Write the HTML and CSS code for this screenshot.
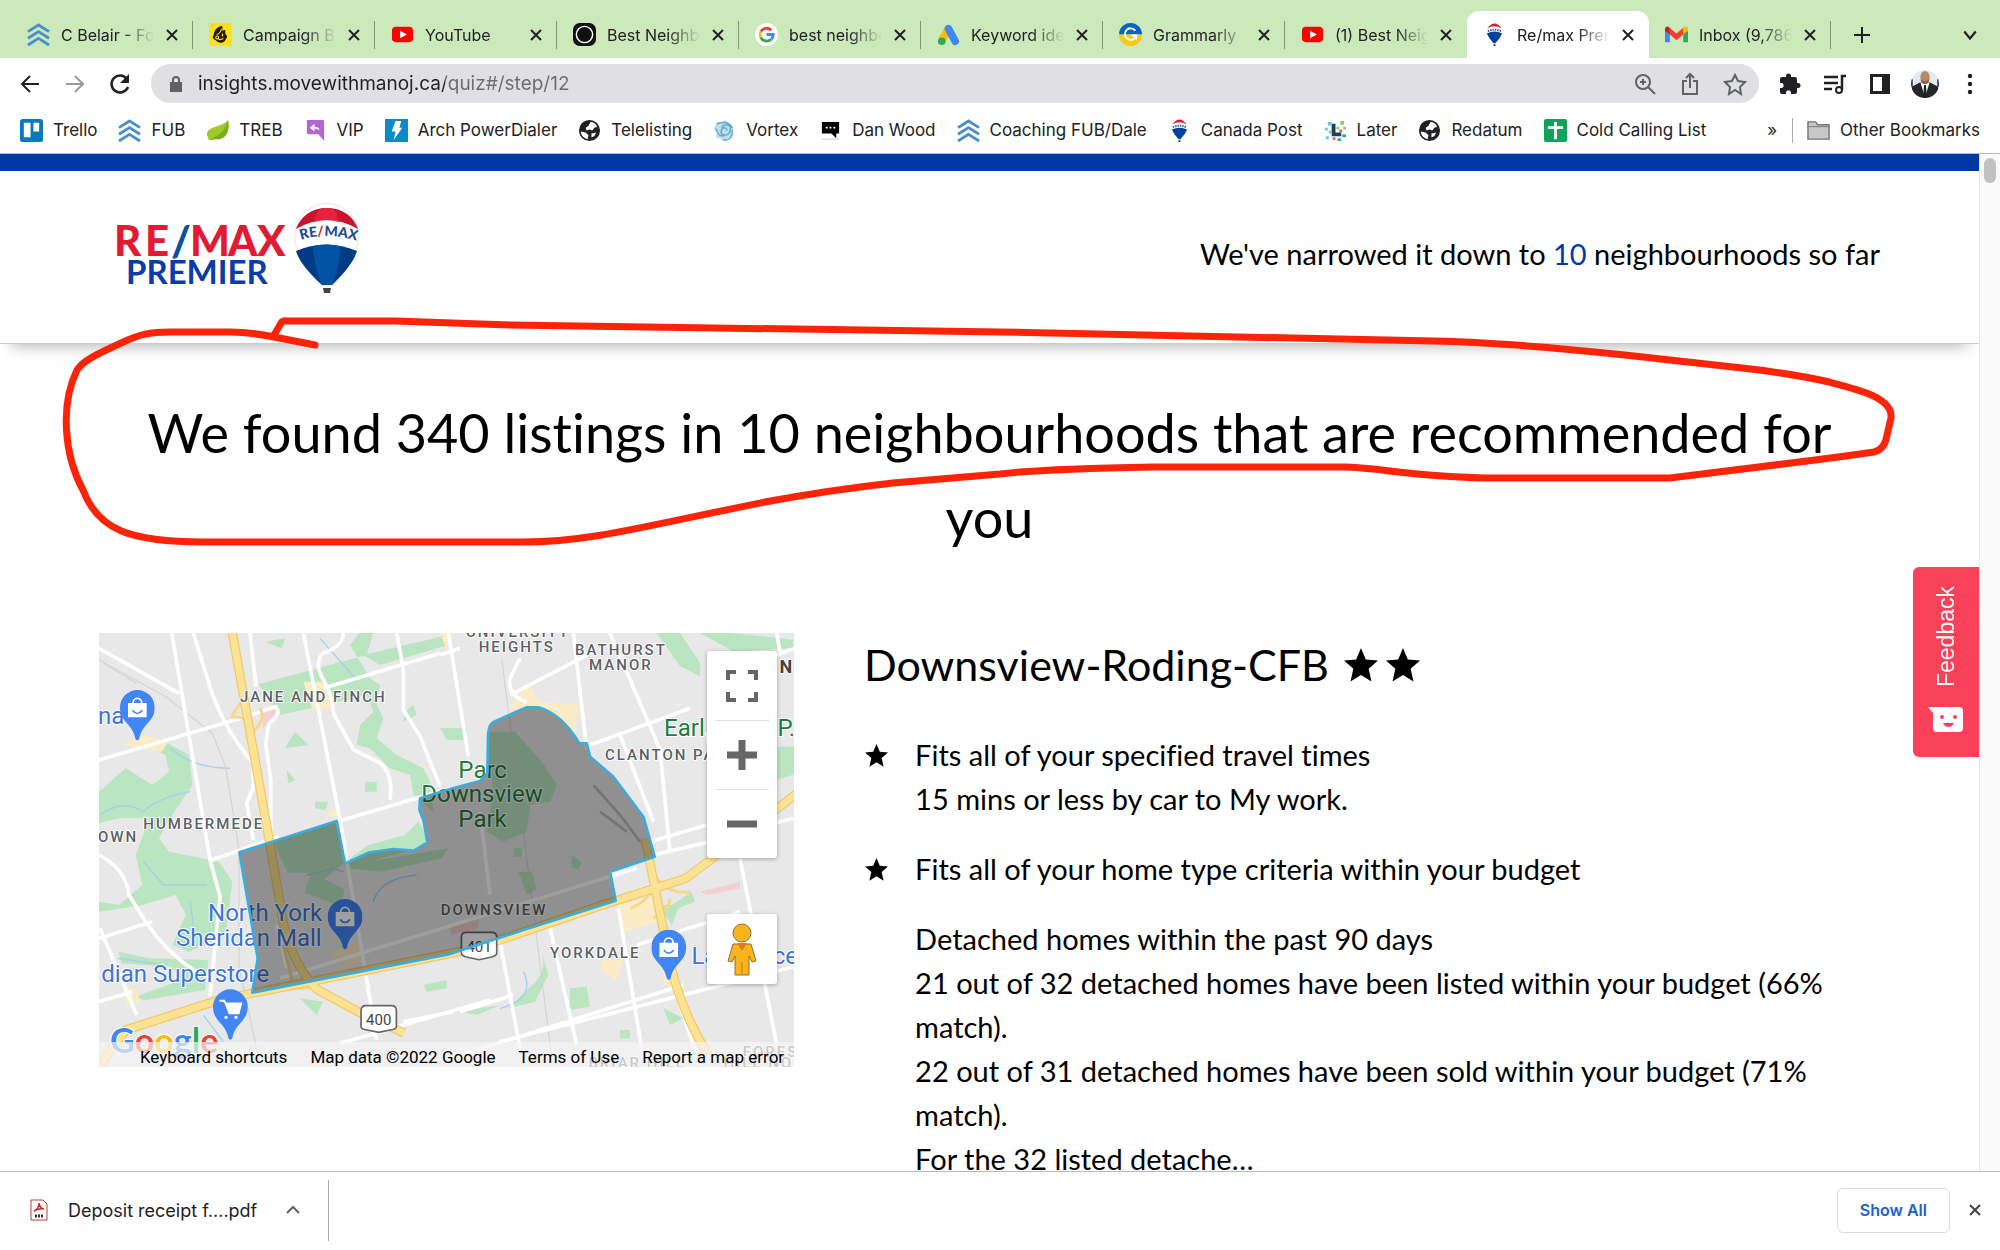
FILE: index.html
```html
<!DOCTYPE html>
<html lang="en">

<head>
    <meta charset="UTF-8">
    <meta name="viewport" content="width=device-width, initial-scale=1.0">
    <title>Re/max Premier</title>
    <link rel="stylesheet" href="styles.css">
</head>

<body>
    <!-- Shared icons -->
    <svg class="sprite" aria-hidden="true">
        <symbol id="fub" viewBox="0 0 24 24">
            <path d="M1 9l11-7 11 7M1 16l11-7 11 7M1 23l11-7 11 7" fill="none" stroke="#4a8fcb" stroke-width="3"/>
        </symbol>
        <symbol id="youtube" viewBox="0 0 24 24">
            <rect x="1" y="4" width="22" height="16" rx="4" fill="#f00"/>
            <path d="M9.500 8v8l7-4z" fill="#fff"/>
        </symbol>
        <symbol id="balloon" viewBox="0 0 24 24">
            <path d="M4 8a8 8 0 0 1 16 0q0 5-7 13h-2Q4 13 4 8z" fill="#fff"/>
            <path d="M4.500 5.500Q12-4.500 19.500 5.500 12 1.500 4.500 5.500z" fill="#dc1c2e"/>
            <path d="M4 11q8-4 16 0-2 5-7 10h-2Q6 16 4 11z" fill="#00439c"/>
            <path d="M5 8.500q7-3 14 0" fill="none" stroke="#33549c" stroke-width="2" stroke-dasharray="1.500 1"/>
            <path d="M11 22h2v2h-2z" fill="#444"/>
        </symbol>
        <symbol id="globe" viewBox="0 0 24 24">
            <circle cx="12" cy="12" r="11" fill="#202124"/>
            <path d="M13 3c3 0 6 2 7 5l-3 1-2 3-3-1-3 1-1-3 3-2zM3 13l5 1 3 3-1 4c-4-1-7-4-7-8zM14 15l5-1-2 4-3 1z" fill="#fff"/>
        </symbol>
        <symbol id="close" viewBox="0 0 14 14">
            <path d="M2 2l10 10M12 2L2 12" fill="none" stroke="currentColor" stroke-width="2"/>
        </symbol>
        <symbol id="star" viewBox="0 0 24 24">
            <path d="M12 0l3.400 8.200 8.600.700-6.600 5.800 2 9L12 19l-7.400 4.700 2-9L0 8.900l8.600-.700z"/>
        </symbol>
        <symbol id="bag-pin" viewBox="0 0 104 152">
            <path d="M52 0a52 52 0 0 1 52 54c0 42-39 48-46 92q-6 10-12 0C39 102 0 96 0 54A52 52 0 0 1 52 0z" fill="#4285f4"/>
            <path d="M24 39h56v43H24z" fill="#fff"/>
            <path d="M39 42v-4a13 13 0 0 1 26 0v4" fill="none" stroke="#fff" stroke-width="5"/>
            <path d="M37 61q15 19 30 0" fill="none" stroke="#4285f4" stroke-width="5"/>
        </symbol>
    </svg>

    <!-- Tabs -->
    <nav class="tabs">
        <div class="tab"><svg class="icon"><use href="#fub"/></svg><a href="#">C Belair - Follow Up</a><button aria-label="Close tab"><svg><use href="#close"/></svg></button></div>
        <div class="tab">
            <svg class="icon" viewBox="0 0 24 24"><path fill="#ffe01b" d="M0 0h24v24H0z"/><path d="M14 3c-5 0-9 5-9 9l-1 2c0 3 2 3 3 4 2 3 7 4 10 0l2-4-2-3V7l-3 1z" fill="#241c15"/><path d="M8 12q4-1 5-6M14 11v3m-4 3q3 1 5-1M7 15a1.500 1.500 0 1 1 0 .1" stroke="#ffe01b" stroke-width="1.200" fill="none"/></svg>
            <a href="#">Campaign Builder</a><button aria-label="Close tab"><svg><use href="#close"/></svg></button>
        </div>
        <div class="tab"><svg class="icon"><use href="#youtube"/></svg><a href="#">YouTube</a><button aria-label="Close tab"><svg><use href="#close"/></svg></button></div>
        <div class="tab">
            <svg class="icon" viewBox="0 0 24 24"><rect width="24" height="24" rx="7" fill="#111"/><circle cx="12" cy="12" r="8.500" fill="none" stroke="#fff" stroke-width="1.500"/></svg>
            <a href="#">Best Neighbourhoods</a><button aria-label="Close tab"><svg><use href="#close"/></svg></button>
        </div>
        <div class="tab">
            <svg class="icon" viewBox="0 0 24 24"><circle cx="12" cy="12" r="12" fill="#fff"/><g fill="none" stroke-width="3"><path d="M17 7.500A7 7 0 0 0 6 9" stroke="#ea4335"/><path d="M6 9a7 7 0 0 0 0 6" stroke="#fbbc05"/><path d="M6 15a7 7 0 0 0 11 2" stroke="#34a853"/><path d="M17 17q2-2 2-5h-7" stroke="#4285f4"/></g></svg>
            <a href="#">best neighbourhood</a><button aria-label="Close tab"><svg><use href="#close"/></svg></button>
        </div>
        <div class="tab">
            <svg class="icon" viewBox="0 0 24 24"><path d="M12 6L5 18" stroke="#fbbc04" stroke-width="8"/><path d="M12 6l7 13" stroke="#4285f4" stroke-width="8" stroke-linecap="round"/><circle cx="5" cy="19" r="4" fill="#34a853"/></svg>
            <a href="#">Keyword ideas</a><button aria-label="Close tab"><svg><use href="#close"/></svg></button>
        </div>
        <div class="tab">
            <svg class="icon" viewBox="0 0 24 24"><path d="M0 12a12 12 0 0 1 24 0z" fill="#0b62c4"/><path d="M0 12a12 12 0 0 0 24 0z" fill="#f5cb12"/><path d="M17 8a6 6 0 1 0 1 5h-5m5 0v4" fill="none" stroke="#fff" stroke-width="2"/></svg>
            <a href="#">Grammarly</a><button aria-label="Close tab"><svg><use href="#close"/></svg></button>
        </div>
        <div class="tab"><svg class="icon"><use href="#youtube"/></svg><a href="#">(1) Best Neighbourhood</a><button aria-label="Close tab"><svg><use href="#close"/></svg></button></div>
        <div class="tab active"><svg class="icon"><use href="#balloon"/></svg><a href="#">Re/max Premier</a><button aria-label="Close tab"><svg><use href="#close"/></svg></button></div>
        <div class="tab">
            <svg class="icon" viewBox="0 0 24 24"><path d="M0 6v14h5V9z" fill="#4285f4"/><path d="M24 6v14h-5V9z" fill="#34a853"/><path d="M5 5l7 6 7-6v7l-7 6-7-6z" fill="#ea4335"/><path d="M0 6q1-4 5-1v7l-5-4z" fill="#c5221f"/><path d="M24 6q-1-4-5-1v7l5-4z" fill="#fbbc04"/></svg>
            <a href="#">Inbox (9,786)</a><button aria-label="Close tab"><svg><use href="#close"/></svg></button>
        </div>
        <button class="new-tab" aria-label="New tab"><svg viewBox="0 0 18 18"><path d="M9 1v16M1 9h16" stroke="currentColor" stroke-width="2"/></svg></button>
        <button class="tab-search" aria-label="Search tabs"><svg viewBox="0 0 14 14"><path d="M2 4l5 6 5-6" fill="none" stroke="currentColor" stroke-width="2"/></svg></button>
    </nav>

    <!-- Toolbar -->
    <div class="toolbar">
        <button aria-label="Back"><svg viewBox="0 0 24 24"><path d="M21 12H4m8-8l-8 8 8 8" fill="none" stroke="#202124" stroke-width="2"/></svg></button>
        <button aria-label="Forward"><svg viewBox="0 0 24 24"><path d="M3 12h17m-8-8l8 8-8 8" fill="none" stroke="#96989b" stroke-width="2"/></svg></button>
        <button aria-label="Reload"><svg viewBox="0 0 24 24"><path d="M19 7a8.500 8.500 0 1 0 1 8" fill="none" stroke="#202124" stroke-width="2.500"/><path d="M21 2v9h-9z" fill="#202124"/></svg></button>
        <div class="address">
            <svg class="lock" viewBox="0 0 14 18"><path d="M1 7h12v10H1z" fill="#5f6368"/><path d="M4 8V5a3 3 0 0 1 6 0v3" fill="none" stroke="#5f6368" stroke-width="2"/></svg>
            <input type="text" aria-label="Address" value="insights.movewithmanoj.ca/quiz#/step/12">
            <button aria-label="Zoom"><svg viewBox="0 0 24 24"><g fill="none" stroke="#5f6368" stroke-width="2"><circle cx="10" cy="10" r="7"/><path d="M15 15l7 7M10 7v6M7 10h6"/></g></svg></button>
            <button aria-label="Share"><svg viewBox="0 0 24 24"><path d="M9 9H5v13h14V9h-4M12 16V3M8 6l4-4 4 4" fill="none" stroke="#5f6368" stroke-width="2"/></svg></button>
            <button aria-label="Bookmark"><svg viewBox="0 0 24 24"><path d="M12 3l3 6 7 1-5 5 1 7-6-4-6 4 1-7-5-5 7-1z" fill="none" stroke="#5f6368" stroke-width="2"/></svg></button>
        </div>
        <button aria-label="Extensions"><svg viewBox="0 0 24 24"><path d="M20 11h-1V7a2 2 0 0 0-2-2h-4V4a2.500 2.500 0 0 0-5 0v1H4a2 2 0 0 0-2 2v4h2a2.700 2.700 0 0 1 0 5H2v4a2 2 0 0 0 2 2h4v-2a2.700 2.700 0 0 1 5 0v2h4a2 2 0 0 0 2-2v-4h1a2.500 2.500 0 0 0 0-5z" fill="#202124"/></svg></button>
        <button aria-label="Media"><svg viewBox="0 0 24 24"><path d="M1 5h14M1 11h14M1 17h8M23 4h-4v14" fill="none" stroke="#202124" stroke-width="2.500"/><circle cx="16" cy="18" r="3" fill="none" stroke="#202124" stroke-width="2"/></svg></button>
        <button aria-label="Side panel"><svg viewBox="0 0 24 24"><path d="M2 2h20v20H2zM5 5v14h9V5z" fill="#202124" fill-rule="evenodd"/></svg></button>
        <button class="profile" aria-label="Profile"><svg viewBox="0 0 32 32"><clipPath id="round"><circle cx="16" cy="16" r="15"/></clipPath><g clip-path="url(#round)"><path d="M0 0h32v32H0z" fill="#e6eaf0"/><path d="M0 11h3v8H0zM29 11h3v8h-3zM10 0h12v1H10z" fill="#2e3f7d"/><path d="M2 32V19l9-5h10l9 5v13z" fill="#25262a"/><path d="M11 14l5 16 5-16z" fill="#fff"/><path d="M15 17h2l1 13h-4z" fill="#202124"/><ellipse cx="16" cy="9" rx="5" ry="7" fill="#ba8868"/><path d="M12 11q4 5 8 0v3q-4 4-8 0z" fill="#8a5f48"/></g></svg></button>
        <button aria-label="Menu"><svg viewBox="0 0 24 24"><g fill="#202124"><circle cx="12" cy="4" r="2.200"/><circle cx="12" cy="12" r="2.200"/><circle cx="12" cy="20" r="2.200"/></g></svg></button>
    </div>

    <!-- Bookmarks -->
    <nav class="bookmarks">
        <a href="#"><svg class="icon" viewBox="0 0 24 24"><rect width="24" height="24" rx="3" fill="#0a78bf"/><path d="M4 4h7v15H4zM14 4h6v9h-6z" fill="#fff"/></svg>Trello</a>
        <a href="#"><svg class="icon"><use href="#fub"/></svg>FUB</a>
        <a href="#"><svg class="icon" viewBox="0 0 24 24"><path d="M1 17C0 7 17 9 23 1c2 10-1 22-14 20l-6 1z" fill="#9fc92a"/><path d="M3 22C9 19 19 16 23 1c2 10-1 22-14 20z" fill="#78ad22"/></svg>TREB</a>
        <a href="#"><svg class="icon" viewBox="0 0 24 24"><path d="M3 1h17q1 0 1 2v20l-6-7H5q-2 0-2-2z" fill="#b465d4"/><path d="M16 12c0-3-2-4-5-4V5L6 9l5 4v-3q3 0 5 2z" fill="#fff"/></svg>VIP</a>
        <a href="#"><svg class="icon" viewBox="0 0 24 24"><path d="M0 0h24v24H0z" fill="#0b8bc9"/><path d="M11 2h6l-2 7h3L9 22l2-9H7z" fill="#fff"/></svg>Arch PowerDialer</a>
        <a href="#"><svg class="icon"><use href="#globe"/></svg>Telelisting</a>
        <a href="#"><svg class="icon" viewBox="0 0 24 24"><path d="M4 4l5-1 4-2 3 4 5 3-1 5 2 4-6 2-3 4-4-2-6-2 1-5-3-4z" fill="#b9dfec"/><path d="M4 5q12-4 16 4-7-6-11 0M3 10q3 10 9 7M10 22q11 1 10-11M18 8q1 9-6 9-5-1-3-6 4-4 6 1" fill="none" stroke="#63a9c6" stroke-width="1.500"/></svg>Vortex</a>
        <a href="#"><svg class="icon" viewBox="0 0 24 24"><path d="M3 3h18v12h-3v5l-5-5H3z"/><path d="M7 8h2v2H7zM11 8h2v2h-2zM15 8h2v2h-2z" fill="#fff"/><path d="M3 21h18" stroke="#ccc"/></svg>Dan Wood</a>
        <a href="#"><svg class="icon"><use href="#fub"/></svg>Coaching FUB/Dale</a>
        <a href="#"><svg class="icon"><use href="#balloon"/></svg>Canada Post</a>
        <a href="#"><svg class="icon" viewBox="0 0 24 24"><path d="M8 5h4v9h6v4H8z" fill="#1d4154"/><path d="M4 3h4v4H4zM1 9h3v3H1zM5 12h3v3H5zM2 18h3v3H2z" fill="#6fc7e8"/><path d="M17 2h4v4h-4zM13 8h3v3h-3zM20 8h3v3h-3z" fill="#8dd35f"/><path d="M16 11h3v3h-3zM9 19h3v3H9z" fill="#e56a50"/><path d="M19 16h4v3h-4zM14 20h4v3h-4z" fill="#3fa8a0"/></svg>Later</a>
        <a href="#"><svg class="icon"><use href="#globe"/></svg>Redatum</a>
        <a href="#"><svg class="icon" viewBox="0 0 24 24"><rect width="24" height="24" rx="2" fill="#12a05c"/><path d="M12 3v18M4 9h16" stroke="#fff" stroke-width="3"/></svg>Cold Calling List</a>
        <button class="more" aria-label="More bookmarks">»</button>
        <a class="other" href="#"><svg class="icon" viewBox="0 0 24 24"><path d="M1 3h8l2 3h12v15H1z" fill="#c8c8c8" stroke="#747474" stroke-width="1.500"/><path d="M1 8h22" stroke="#747474"/></svg>Other Bookmarks</a>
    </nav>

    <div class="viewport">
        <main class="page">
            <header class="site-header">
                <svg class="logo" viewBox="0 0 260 100" role="img" aria-label="RE/MAX Premier">
                    <g class="logo-remax"><text x="3" y="58">R</text><text x="34" y="58">E</text><text class="logo-blue" x="60" y="58">/</text><text x="79" y="58">M</text><text x="117" y="58">A</text><text x="146" y="58">X</text></g>
                    <text class="logo-premier" x="15" y="86">PREMIER</text>
                    <path d="M184 37a31 31 0 0 1 63 0q2 18-24 50h-14Q182 55 184 37z" fill="#fff" stroke="#e4e4e4"/>
                    <path d="M185 31C190 18 200 10 216 10s27 9 31 21q-31-18-62 0z" fill="#c9142b"/>
                    <path d="M203 24q2-11 8-14h9q6 3 8 14-12-4-25 0z" fill="#e5233d"/>
                    <path d="M185 53q30-13 61 0-4 14-25 34h-10Q189 67 185 53z" fill="#003c86"/>
                    <path d="M202 48q13-3 27 0 0 20-8 39h-10q-8-18-9-39z" fill="#0353a4"/>
                    <path id="band" d="M190 42q26-9 60 2" fill="none"/>
                    <text class="logo-band"><textPath href="#band">RE<tspan fill="#dc1c2e">/</tspan>MAX</textPath></text>
                    <path d="M212 90h8l-1 5h-6z" fill="#444"/>
                </svg>
                <p>We've narrowed it down to <span class="count">10</span> neighbourhoods so far</p>
            </header>

            <h1>We found 340 listings in 10 neighbourhoods that are recommended for you</h1>

            <section class="result">
                <div class="map">
                    <svg class="map-canvas" viewBox="27 24 2085 1302" role="img" aria-label="Map of Downsview-Roding-CFB">
                        <path d="M0 0h2200v1400H0z" fill="#e8e8e8"/>
                        <!-- Parks -->
                        <g fill="#b9e5c0">
                            <path d="M505 178L830 90l20-70h-40l-30 40 60 100 30 20-10 60 20 40-20 60 60 50 80 40 20 40 10 90-60-50-10-60-60-20-60-60-40-10 10-60 40-40-20-50-260 60z"/>
                            <path d="M820 90L1075 30v30L870 120zM525 50l60-10-10 30zM585 370l30-50 40 40zM590 435l25 30-20 10zM825 470l35 0 0 30-35 0zM675 530l40 0-10 25-30-5zM945 260l25-20 10 30-40 20zM1050 310h80v35h-60z"/>
                            <path d="M27 500l80-70 80 50 50-40-10-50-40-20 20-30 90 50 10 90-60 90-40 70 30 40 150 30 40 60-20 160-110 50-50-20 40-90-30-60-100 30-130 20 0-30 60 10 70-60-20-90 40-110-90 0-80 20z"/>
                            <path d="M85 980l90 20 180 5-10 90-180 30-30-10 140-50-30-40-150-10z"/>
                            <path d="M550 650l185-62 28 125-60 50 60 30-10 50-110-40 20-60-70 0z"/>
                            <path d="M765 710l70-50 110-30 40-40 30 50-30 30-150 40 120-20 120-20-20 30-180 40-100-10z"/>
                            <path d="M1200 320h75l80 90 45 70-20 50-60 10-10 80-70 30-50-30 20-120-20-120z"/>
                            <path d="M1285 740h40l15 50-30 20zM1445 690l30 20-10 25-20-10zM1270 670h25v25h-25zM1050 310h35l5 30zM1440 1090l50-5 10 60-60 10zM1590 1215h30v25h-30zM1720 1150l60 30-40 20zM1000 1080l70-15v25l-60 10zM630 1120l70 10-20 40z"/>
                            <path d="M1355 980q20 70-50 120l-50 50 80-20 40-80zM1110 1160l120-20-70 30z"/>
                            <path d="M1700 24l70 100 60 30 0-40-60-90zM1830 24h90l190 20v25l-180 10zM1745 840l60-40 10 30-50 20-20 50-40-60zM2060 365h60v80l-60 20z"/>
                        </g>
                        <!-- Commercial blocks -->
                        <g fill="#fcecc5">
                            <path d="M640 170h60l30 80-60 10zM95 360l70-30 70 20-20 30zM1255 250l60-80 30 60 120 10-10 90-90-70zM1575 840l110-20 20 70-100 30zM1530 1005h70l-20 60-40-20zM100 1090h40l10 40-40 10zM720 980l90-30 10 60-60 20zM1720 980h40v100h-40zM1050 24h40l-20 50zM710 570l30-25 20 35z"/>
                        </g>
                        <path d="M515 260l55-10-50 60zM1830 800l120-30v20l-100 20zM1075 900l90-20v30l-80 20z" fill="#f4cfcf"/>
                        <!-- Water and rail -->
                        <g fill="none">
                            <path d="M690 40l110 125M240 370q70 60 180 60M30 570q70-50 130-10 40-40 140-60M160 710l60 70 130 0M300 830l10 70M850 830q20-70 130-80M1300 1040q40 80-70 110M85 1000l140 20M650 750l80-20 30 10M340 1170l60 80" stroke="#a5cfea" stroke-width="4"/>
                            <path d="M27 105l200 110 140 110 40 100 40 250 0 350 60 280M1235 100l150 1200M40 115l100 60" stroke="#d0d0d0" stroke-width="3"/>
                            <path d="M1510 480l80 90 60 80M1530 560l80 60" stroke="#bcbcbc" stroke-width="8"/>
                        </g>
                        <!-- Streets -->
                        <g fill="none" stroke="#fff" stroke-width="11" stroke-linejoin="round">
                            <path d="M245 24l115 680 30 110-30 300M310 24l40 130Q390 300 490 415l0 70-20 50 20 110M480 24l18 160M27 70l240 135M27 405l440-130 90-30q20 20-20 50l-10 60 15 110 0 180 10 50M640 24l110 560 110 660M760 24q0 40-60 60-30 30 0 80 30 50 30 100l60 110 80 40q40 30 30 110M700 190L1050 85M920 24l20 110 0 120 50 80 60 150M365 705l200-70M740 590l340-100M27 690q80 40 90 120l50 80q60 90 150 150M30 910l110 260M27 940l160-50M570 1060L1640 730M27 1130l100-30M560 900l30 130M750 1255l450-130M940 1190l150-30"/>
                            <path d="M1050 90l60-20M1075 24l60 370M1450 24l40 350M1260 210l230-120M1290 100l-30 60q-10 50 50 70M1500 360l300-110M1560 24l150 350 30 310M1680 650l170-50M1590 330l100 260M2110 580l-200 50M1170 560l30 250M1230 950l60 320M1380 910l80 350M1585 850l70 420M1110 1160l160-50M1230 1250l900-230M1080 1300l700-220M1640 960l310-100M1690 690L1860 650M1950 700l110 560M1750 1080l80 240M2060 24l10 60M1850 320l30 200M1920 150L2112 70"/>
                        </g>
                        <!-- Highways -->
                        <path d="M455 230q-30 40-30 45 60 0 65 45 40-40 20-70M1620 850q60-20 80-90 40 50 100 40M1690 880q50-30 50-60M580 960q20 80 30 120M590 1090l80 0" fill="none" stroke="#f6d88a" stroke-width="9"/>
                        <g fill="none" stroke="#edc967" stroke-width="28" stroke-linejoin="round">
                            <path d="M427 24l100 560 55 320q30 120 100 190l130 70 130 60M27 1325l80-110 280-90 770-155 380-130 250-80 120-90 220-170M1665 640l60 300q30 190 130 350"/>
                        </g>
                        <g fill="none" stroke="#fde293" stroke-width="21" stroke-linejoin="round">
                            <path d="M427 24l100 560 55 320q30 120 100 190l130 70 130 60M27 1325l80-110 280-90 770-155 380-130 250-80 120-90 220-170M1665 640l60 300q30 190 130 350"/>
                        </g>

                        <!-- Labels -->
                        <g class="area">
                            <text x="450" y="230">JANE AND FINCH</text>
                            <text x="160" y="612">HUMBERMEDE</text>
                            <text x="24" y="651">OWN</text>
                            <text x="1052" y="870">DOWNSVIEW</text>
                            <text x="1380" y="998">YORKDALE</text>
                            <text x="1128" y="35">UNIVERSITY</text>
                            <text x="1166" y="82">HEIGHTS</text>
                            <text x="1455" y="89">BATHURST</text>
                            <text x="1497" y="136">MANOR</text>
                            <text x="1545" y="406">CLANTON PARK</text>
                            <text x="1495" y="1328">BRIAR HILL</text>
                            <text x="1958" y="1296">FOREST</text>
                            <text x="1900" y="1330">HILL NO</text>
                        </g>
                        <g class="park">
                            <text x="1105" y="459">Parc</text>
                            <text x="994" y="532">Downsview</text>
                            <text x="1105" y="605">Park</text>
                            <text x="1722" y="332">Earl</text>
                            <text x="2062" y="332">P.</text>
                        </g>
                        <text class="district" x="2068" y="144">N</text>
                        <g class="shop">
                            <text x="24" y="296">na</text>
                            <text x="354" y="888">North York</text>
                            <text x="258" y="962">Sheridan Mall</text>
                            <text x="34" y="1072">dian Superstore</text>
                            <text x="1804" y="1016">La<tspan x="2048">ce</tspan></text>
                        </g>
                        <use href="#bag-pin" x="90" y="195" width="104" height="152"/>
                        <use href="#bag-pin" x="713" y="822" width="104" height="152"/>
                        <use href="#bag-pin" x="1684" y="914" width="104" height="152"/>
                        <path d="M421 1093a52 52 0 0 1 52 54c0 42-39 48-46 92q-6 10-12 0c-7-44-46-50-46-92a52 52 0 0 1 52-54z" fill="#4285f4"/>
                        <path d="M388 1127h15l15 38h28l8-30h-44" fill="#fff" stroke="#fff" stroke-width="5"/>
                        <circle cx="408" cy="1177" r="5" fill="#fff"/><circle cx="438" cy="1177" r="5" fill="#fff"/>
                        <g fill="#fff" stroke="#666" stroke-width="5">
                            <path d="M828 1142h76q15 0 15 15v47q0 8-15 10l-38 8-38-8q-15-2-15-10v-47q0-15 15-15z"/>
                            <path d="M1129 922h76q15 0 15 15v47q0 8-15 12l-38 8-38-8q-15-4-15-12v-47q0-15 15-15z"/>
                        </g>
                        <g class="shield"><text x="866" y="1199">400</text><text x="1167" y="980">401</text></g>
                        <path d="M448 682l292-94 25 127 70-32 75-11 62 5 40-25-12-67-12-30 2-35 90-28 90-24 22-23 2-115q2-35 18-40l98-43h35q70 20 123 108h22l10 40 70 60 90 120 34 120-134 45 17 87-277 88-225 73-588 115 16-103z" fill="#000" fill-opacity=".38" stroke="#3dabdb" stroke-width="8" stroke-linejoin="round"/>
                        <text class="google" x="60" y="1283"><tspan fill="#4285f4">G</tspan><tspan fill="#ea4335">o</tspan><tspan fill="#fbbc05">o</tspan><tspan fill="#4285f4">g</tspan><tspan fill="#34a853">l</tspan><tspan fill="#ea4335">e</tspan></text>
                    </svg>
                    <div class="map-zoom">
                        <button aria-label="Fullscreen"><svg viewBox="0 0 32 32"><path d="M2 10V2h8M22 2h8v8M30 22v8h-8M10 30H2v-8" fill="none" stroke="#666" stroke-width="4"/></svg></button>
                        <button aria-label="Zoom in"><svg viewBox="0 0 32 32"><path d="M16 1v30M1 16h30" stroke="#666" stroke-width="7"/></svg></button>
                        <button aria-label="Zoom out"><svg viewBox="0 0 32 32"><path d="M1 16h30" stroke="#666" stroke-width="7"/></svg></button>
                    </div>
                    <button class="pegman" aria-label="Street View"><svg viewBox="0 0 32 54"><g fill="#fbb41a" stroke="#8c6d3c"><path d="M7 22h18l5 17-4 1-3-6v19H9V34l-3 6-4-1z"/><circle cx="16" cy="11" r="9"/></g><path d="M11 21h10l-5 8z" fill="#df7b22"/><path d="M16 40v12" stroke="#b77a1b"/></svg></button>
                    <div class="map-terms">
                        <button>Keyboard shortcuts</button>
                        <span>Map data ©2022 Google</span>
                        <a href="#">Terms of Use</a>
                        <a href="#">Report a map error</a>
                    </div>
                </div>

                <div class="details">
                    <h2>Downsview-Roding-CFB <span class="rating"><svg><use href="#star"/></svg><svg><use href="#star"/></svg></span></h2>
                    <ul>
                        <li>
                            <svg class="bullet"><use href="#star"/></svg>
                            <div>
                                <p>Fits all of your specified travel times<br>15 mins or less by car to My work.</p>
                            </div>
                        </li>
                        <li>
                            <svg class="bullet"><use href="#star"/></svg>
                            <div>
                                <p>Fits all of your home type criteria within your budget</p>
                                <p>Detached homes within the past 90 days<br>
                                    21 out of 32 detached homes have been listed within your budget (66% match).<br>
                                    22 out of 31 detached homes have been sold within your budget (71% match).<br>
                                    For the 32 listed detache…</p>
                            </div>
                        </li>
                    </ul>
                </div>
            </section>
        </main>
        <div class="scrollbar"><div class="thumb"></div></div>
        <button class="feedback">
            <span>Feedback</span>
            <svg viewBox="0 0 36 28"><path d="M0 1h31q4 0 4 4v17q0 4-4 4H9q-4 0-4-4V7z" fill="#fff"/><circle cx="14" cy="11" r="2" fill="#f9425a"/><circle cx="27" cy="11" r="2" fill="#f9425a"/><path d="M15 17h11q-2 4-5.500 4T15 17z" fill="#f9425a"/></svg>
        </button>
    </div>

    <!-- Downloads -->
    <footer class="downloads">
        <a class="file" href="#">
            <svg viewBox="0 0 18 22"><path d="M1 1h12l4 4v16H1z" fill="#fff" stroke="#c33b3b"/><path d="M4 12q5-2 5-8 1 6 5 6-5-1-10 2z" fill="none" stroke="#d82020" stroke-width="1.500"/><path d="M5 17h9" stroke="#333" stroke-width="3" stroke-dasharray="2 1"/></svg>
            Deposit receipt f....pdf
        </a>
        <button class="file-menu" aria-label="File options"><svg viewBox="0 0 14 14"><path d="M1 10l6-6 6 6" fill="none" stroke="#5f6368" stroke-width="2"/></svg></button>
        <button class="show-all">Show All</button>
        <button class="dismiss" aria-label="Close downloads"><svg><use href="#close"/></svg></button>
    </footer>

    <!-- Red pen mark around the headline -->
    <svg class="pen" viewBox="0 0 2000 1250" preserveAspectRatio="none" aria-hidden="true">
        <path d="M315 345L274 337Q250 332 230 332H170C150 332 140 334 121 343 95 355 83 361 77 370C60 405 64 455 83 490C98 530 130 542 204 542H523C590 542 640 527 765 502Q830 490 893 483L1000 474Q1040 469 1153 467H1344C1375 467 1420 478 1497 478H1670L1791 463Q1840 457 1874 452 1885 449 1887 435L1891 418C1893 398 1860 390 1829 382 1790 373 1760 370 1733 367L1625 355Q1500 342 1434 341L1000 332 510 325 395 321H287Q282 320 280 325L274 335"/>
    </svg>
</body>

</html>
```
FILE: styles.css
```css
* {
    box-sizing: border-box;
}

body {
    margin: 0;
    height: 100vh;
    display: flex;
    flex-direction: column;
    overflow: hidden;
    background: #fff;
    color: #000;
    font-family: Inter, "Liberation Sans", sans-serif;
    font-size: 16px;
}

button {
    display: flex;
    align-items: center;
    justify-content: center;
    padding: 0;
    border: none;
    background: none;
    color: inherit;
    font: inherit;
    cursor: pointer;
}

a {
    color: inherit;
    text-decoration: none;
}

svg {
    display: block;
    flex: none;
}

.sprite {
    position: absolute;
    width: 0;
    height: 0;
}

.icon {
    width: 23px;
    height: 23px;
}

/* Tabs */
.tabs {
    display: flex;
    height: 58px;
    padding: 11px 22px 0 11px;
    background: #cce9bc;
    color: #202124;
}

.tab {
    display: flex;
    align-items: center;
    flex: 0 1 182px;
    min-width: 0;
    gap: 11px;
    padding: 0 14px 0 16px;
    background: linear-gradient(#7d9a74, #7d9a74) right center / 1px 28px no-repeat;
}

.tab a {
    flex: 1;
    min-width: 0;
    overflow: hidden;
    white-space: nowrap;
    mask-image: linear-gradient(to right, #000 65%, transparent);
}

.tab button {
    width: 14px;
}

.tab svg:not(.icon) {
    width: 14px;
    height: 14px;
}

.tab.active {
    background: #fff;
    border-radius: 12px 12px 0 0;
}

.tab:has(+ .active) {
    background: none;
}

.new-tab {
    width: 62px;
}

.new-tab svg {
    width: 18px;
    height: 18px;
}

.tab-search {
    margin-left: auto;
}

.tab-search svg {
    width: 16px;
    height: 16px;
}

/* Toolbar */
.toolbar {
    display: flex;
    align-items: center;
    gap: 21px;
    padding: 6px 18px;
}

.toolbar button svg {
    width: 24px;
    height: 24px;
}

.toolbar .profile {
    margin: 0 -3px;
}

.toolbar .profile svg {
    width: 30px;
    height: 30px;
}

.address {
    display: flex;
    align-items: center;
    flex: 1;
    height: 39px;
    gap: 21px;
    padding: 0 12px 0 18px;
    margin: 0 -2px;
    border-radius: 20px;
    background: #e0e0e2;
}

.address .lock {
    width: 14px;
    height: 18px;
    margin-right: -6px;
}

.address input {
    flex: 1;
    min-width: 0;
    padding: 0;
    border: none;
    outline: none;
    /* host is dark, path is grey */
    background: linear-gradient(to right, #202124 247px, #6a6c70 247px);
    background-clip: text;
    color: transparent;
    font-family: inherit;
    font-size: 19px;
}

/* Bookmarks */
.bookmarks {
    display: flex;
    align-items: center;
    height: 44px;
    gap: 21px;
    padding: 0 20px 2px;
    color: #202124;
    font-size: 17px;
    white-space: nowrap;
}

.bookmarks a {
    display: flex;
    align-items: center;
    gap: 10px;
}

.bookmarks .more {
    margin-left: auto;
}

.bookmarks .other {
    margin-left: -6px;
    padding-left: 14px;
    border-left: 1px solid #aaa;
    line-height: 25px;
}

/* Page */
.viewport {
    position: relative;
    display: flex;
    flex: 1;
    min-height: 0;
    border-top: 1px solid #bbb;
}

.page {
    flex: 1;
    min-width: 0;
    overflow: hidden;
    border-top: 17px solid #0038a8;
    font-family: Lato, sans-serif;
    font-size: 29px;
    font-variant-ligatures: none;
    line-height: 44px;
}

.page p,
.page h1,
.page h2 {
    margin: 0;
    font-weight: 400;
}

.site-header {
    display: flex;
    align-items: center;
    justify-content: space-between;
    height: 173px;
    padding: 0 99px 6px 111px;
    border-bottom: 1px solid #ccc;
    box-shadow: 0 14px 14px -12px rgba(0, 0, 0, .3);
}

.logo {
    width: 260px;
    height: 100px;
    margin-bottom: 12px;
}

.logo-remax {
    font-size: 42px;
    font-weight: 900;
    fill: #e11b33;
}

.logo-remax .logo-blue {
    fill: #0b50a0;
}

.logo-premier {
    font-size: 33px;
    font-weight: 700;
    fill: #0a3cab;
}

.logo-band {
    font-size: 14px;
    font-weight: 900;
    fill: #1d4b94;
}

.count {
    color: #0038a8;
}

.page h1 {
    padding: 0 99px;
    margin: 46px 0 73px;
    font-size: 54px;
    line-height: 85px;
    text-align: center;
}

.result {
    display: grid;
    grid-template-columns: 13fr 19fr;
    align-items: start;
    gap: 70px;
    padding: 0 99px;
}

.map {
    position: relative;
    overflow: hidden;
    font-family: Roboto, sans-serif;
}

.map-canvas {
    width: 100%;
    height: auto;
}

.map-canvas text {
    paint-order: stroke;
    stroke: #fff;
    stroke-width: 6px;
    stroke-linejoin: round;
}

.area {
    font-size: 45px;
    font-weight: 500;
    letter-spacing: 6px;
    fill: #5c5f63;
}

.park {
    font-size: 72px;
    fill: #1d7d3c;
}

.district {
    font-size: 54px;
    font-weight: 700;
    fill: #444;
}

.shop {
    font-size: 72px;
    fill: #3d74d6;
}

.map-canvas .shield text {
    font-size: 45px;
    text-anchor: middle;
    fill: #444;
    stroke: none;
}

.google {
    font-family: Lato, sans-serif;
    font-size: 102px;
    font-weight: 700;
}

.map-zoom,
.pegman {
    position: absolute;
    right: 17px;
    width: 70px;
    border-radius: 3px;
    background: #fff;
    box-shadow: 0 1px 4px rgba(0, 0, 0, .3);
}

.map-zoom {
    top: 18px;
}

.map-zoom button {
    width: 54px;
    height: 69px;
    margin: 0 auto;
}

.map-zoom button + button {
    border-top: 1px solid #e0e0e0;
}

.map-zoom svg {
    width: 32px;
    height: 32px;
}

.pegman {
    bottom: 83px;
    height: 70px;
}

.pegman svg {
    width: 32px;
    height: 54px;
}

.map-terms {
    position: absolute;
    right: 0;
    bottom: 0;
    left: 0;
    display: flex;
    align-items: center;
    justify-content: flex-end;
    height: 25px;
    gap: 23px;
    padding: 4px 10px 0 0;
    background: rgba(245, 245, 245, .7);
    font-size: 17px;
    line-height: 20px;
    white-space: nowrap;
}

.page h2 {
    display: flex;
    align-items: center;
    gap: 14px;
    margin-bottom: 36px;
    font-size: 43px;
    line-height: 64px;
}

.rating {
    display: flex;
    gap: 6px;
}

.rating svg {
    width: 36px;
    height: 34px;
}

.details {
    padding-right: 40px;
}

.details ul {
    margin: 0;
    padding: 0;
    list-style: none;
}

.details li {
    display: flex;
    gap: 26px;
    margin-bottom: 26px;
}

.details li p + p {
    margin-top: 26px;
}

.bullet {
    width: 25px;
    height: 23px;
    margin-top: 11px;
}

.scrollbar {
    width: 21px;
    padding: 4px;
    border-left: 1px solid #e6e6e6;
    background: #fafafa;
}

.thumb {
    height: 25px;
    border-radius: 6px;
    background: #c1c1c1;
}

.feedback {
    position: absolute;
    top: 413px;
    right: 21px;
    flex-direction: column;
    gap: 18px;
    width: 66px;
    height: 190px;
    padding-bottom: 4px;
    border-radius: 6px 0 0 6px;
    background: #f9425a;
    color: #fff;
    font-family: "Liberation Sans", sans-serif;
    font-size: 23px;
}

.feedback span {
    writing-mode: vertical-rl;
    transform: rotate(180deg);
}

.feedback svg {
    width: 36px;
    height: 28px;
}

/* Downloads */
.downloads {
    display: flex;
    align-items: center;
    height: 79px;
    padding: 0 18px 2px 30px;
    border-top: 1px solid #bbb;
    color: #202124;
    font-size: 18px;
}

.file {
    display: flex;
    align-items: center;
    gap: 20px;
}

.file svg {
    width: 18px;
    height: 22px;
}

.file-menu {
    width: 72px;
    height: 61px;
    border-right: 1px solid #aaa;
}

.file-menu svg,
.dismiss svg {
    width: 14px;
    height: 14px;
    color: #444;
}

.show-all {
    height: 45px;
    margin: 0 18px 0 auto;
    padding: 0 22px;
    border: 1px solid #dcdcdc;
    border-radius: 6px;
    color: #1a62cf;
    font-size: 16px;
    font-weight: 600;
}

.pen {
    position: absolute;
    top: 0;
    left: 0;
    width: 100%;
    height: 100%;
    pointer-events: none;
}

.pen path {
    fill: none;
    stroke: #fb2409;
    stroke-width: 7px;
    stroke-linecap: round;
}
```
